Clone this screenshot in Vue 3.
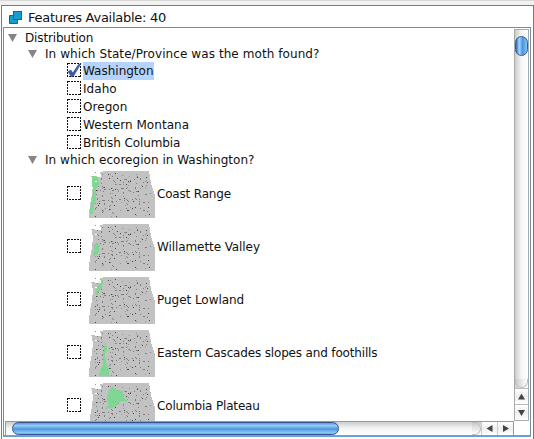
<script setup>
const states = ['Washington', 'Idaho', 'Oregon', 'Western Montana', 'British Columbia']
const regions = [
  { name: 'Coast Range', spacing: -0.18, shape: 'M3 4L9 6L10 13L7 18L7 29L5 34L4 42L1 43L1 38L3 29L4 20L3 12Z' },
  { name: 'Willamette Valley', spacing: -0.09, shape: 'M7 19L11 20L10 27L8 31L4 32L5 24Z' },
  { name: 'Puget Lowland', spacing: -0.04, shape: 'M11 1L14 3L13 11L10 14L8 19L6 17L8 10L10 7Z' },
  { name: 'Eastern Cascades slopes and foothills', spacing: -0.16, shape: 'M17 12L18 20L16 24L17 33L20 39L20 46L10 46L11 40L14 35L14 25L15 18Z' },
  { name: 'Columbia Plateau', spacing: -0.17, shape: 'M24 3L27 7L34 8L35 14L38 18L31 18L28 23L22 25L16 26L19 22L18 16L19 9Z' }
]
const lines = 'M8 6L10 15L7 23L9 30L6 40M14 3L12 11L15 19L13 28L17 36L13 43M11 20L18 18L24 20L31 17L38 18L43 22L50 20L56 24L62 22M23 5L26 13L33 14L37 8L44 10L49 5L55 12L59 16M35 17L34 25L39 30L37 38L42 43M10 31L18 29L25 32L32 28L39 31L46 27L53 32L61 31M48 12L46 19L51 26L50 36L57 41L62 40M21 22L24 29L20 37L26 44'
let seed = 37
function random() {
  seed = (seed * 1664525 + 1013904223) % 4294967296
  return seed / 4294967296
}
const dots = Array.from({ length: 72 }, () => {
  const y = Math.floor(random() * 46)
  return { x: Math.floor(4 + random() * 57), y, dark: random() > 0.45 }
})
</script>

<template>
  <main class="window">
    <section class="features">
      <header>
        <svg class="logo" width="14" height="14" viewBox="0 0 14 14">
          <rect x="4.5" y="1.5" width="8" height="8" fill="#149fd0" stroke="#176783" />
          <path d="M.5 5.5H4.5V9.5H8.5V13.5H.5Z" fill="#139fd0" stroke="#176783" />
        </svg>
        <span class="title">Features Available: 40</span>
      </header>
      <div class="pane">
        <div class="tree">
          <div class="branch root"><i class="arrow"></i><span class="root-label">Distribution</span></div>
          <div class="branch"><i class="arrow"></i><span class="state-question">In which State/Province was the moth found?</span></div>
          <div v-for="(state, index) in states" :key="state" class="choice">
            <svg class="box" width="16" height="18" viewBox="0 0 16 18">
              <rect x=".5" y="1.5" width="13" height="13" class="dashes" />
              <path v-if="index === 0" d="M1 9.5L4 8L5.7 11L11.5 2.5L14.2 1.3L6.3 14.5H4Z" fill="#385ba5" stroke="#294a91" stroke-width=".5" />
            </svg>
            <span class="state" :class="{ selected: index === 0 }">{{ state }}</span>
          </div>
          <div class="branch"><i class="arrow"></i><span class="region-question">In which ecoregion in Washington?</span></div>
          <div v-for="region in regions" :key="region.name" class="region">
            <svg class="box" width="16" height="18" viewBox="0 0 16 18">
              <rect x=".5" y="1.5" width="13" height="13" class="dashes" />
            </svg>
            <svg class="map" width="67" height="47" viewBox="0 0 67 47">
              <g shape-rendering="crispEdges">
                <path d="M2 4L7 6L12 6L11 1L16 0H60L62 12L66 25V47H0V42L1 34L3 23L4 13Z" fill="#c2c2c2" />
                <path :d="lines" class="borders" />
                <rect v-for="(dot, i) in dots" :key="i" :x="dot.x" :y="dot.y" width="1" height="1" :fill="dot.dark ? '#444' : '#959595'" />
                <path :d="region.shape" fill="#7bd98f" fill-opacity=".92" />
                <path d="M2 4L5 5M9 5L12 6M12 3L11 5M6 10L8 11" class="coast" />
              </g>
            </svg>
            <span :style="{ letterSpacing: region.spacing + 'px' }">{{ region.name }}</span>
          </div>
        </div>
        <div class="vertical">
          <i class="thumb"></i>
          <i class="track-end"></i>
          <div class="button"><i class="up"></i></div>
          <div class="button"><i class="down"></i></div>
        </div>
        <div class="horizontal">
          <i class="thumb"></i>
          <i class="track-end"></i>
          <div class="button"><i class="left"></i></div>
          <div class="button"><i class="right"></i></div>
        </div>
      </div>
    </section>
  </main>
</template>

<style>
body { margin: 0; overflow: hidden; }
</style>
<style scoped>
* { box-sizing: border-box; }
.window { width: 534px; height: 439px; padding: 5px 0 0 1px; background: linear-gradient(#d8d8d8 0 1px, #f1f1f1 1px 5px, #fff 5px); font: 12px/16px "DejaVu Sans", sans-serif; color: #111; overflow: hidden; }
.features { height: 434px; border: 1px solid #777b80; border-bottom: 0; padding: 0 2px 2px 1px; background: #fff; }
header { height: 21px; display: flex; align-items: center; padding-left: 6px; gap: 5px; }
.logo { flex: none; }
.title { font-size: 13px; letter-spacing: -.27px; white-space: nowrap; padding-top: 2px; }
.pane { width: 528px; height: 410px; border: 1px solid #738fa7; border-bottom: 2px solid #69a0cf; padding: 1px 1px 0; display: grid; grid-template: 392px 15px / 509px 15px; }
.tree { overflow: hidden; padding-top: 1px; white-space: nowrap; }
.branch { display: flex; align-items: center; height: 16px; padding-left: 23px; gap: 8px; }
.branch.root { padding-left: 3px; }
.root-label { letter-spacing: -.15px; }
.state-question { letter-spacing: .08px; }
.region-question { letter-spacing: .03px; }
.arrow { width: 9px; height: 8px; background: #858585; clip-path: polygon(0 0, 100% 0, 50% 100%); }
.choice { height: 18px; display: flex; align-items: center; padding-left: 62px; }
.choice:nth-child(n+4) .state { letter-spacing: .05px; }
.choice:nth-child(7) .state { letter-spacing: -.1px; }
.state { height: 18px; line-height: 18px; }
.selected { background: #b5d3fc; }
.box { flex: none; overflow: visible; }
.dashes { fill: #fff; stroke: #111; stroke-dasharray: 2 1; shape-rendering: crispEdges; }
.region { height: 53px; display: flex; align-items: center; padding-left: 62px; padding-bottom: 2px; }
.map { flex: none; margin: 2px 1px 0 6px; }
.borders { fill: none; stroke: #606060; stroke-width: .7; stroke-dasharray: 1 3 2 3; }
.coast { fill: none; stroke: #fff; stroke-width: 1; }
.vertical { display: flex; flex-direction: column; border: 1px solid #aaa; background: linear-gradient(90deg, #ccc, #f6f6f6 50%, #fff); padding-top: 6px; }
.vertical .thumb { width: 13px; height: 20px; border: 1px solid #375b91; border-radius: 7px; background: linear-gradient(90deg, #2866b3, #a6d4ff 30%, #4a94df 60%, #83c4fa); }
.vertical .track-end { height: 9px; margin-top: auto; border: 1px solid #bbb; border-top: 0; border-radius: 0 0 7px 7px; background: linear-gradient(90deg, #ccc, #fff); }
.vertical .button { height: 16px; border-top: 1px solid #bbb; }
.button { display: flex; align-items: center; justify-content: center; background: linear-gradient(#fff, #eee 50%, #fff); }
.up, .down { width: 7px; height: 6px; background: #444; clip-path: polygon(50% 0, 100% 100%, 0 100%); }
.down { transform: rotate(180deg); }
.horizontal { display: flex; border: 1px solid #999; background: linear-gradient(#ccc, #f6f6f6 50%, #fff); padding-left: 6px; }
.horizontal .thumb { width: 327px; height: 13px; border: 1px solid #315792; border-radius: 7px; background: linear-gradient(#5f98dc, #9acbf8 24%, #66aae9 45%, #4b94dc 55%, #89c8f8 85%, #70aeda); }
.horizontal .track-end { width: 9px; height: 13px; margin-left: auto; border: 1px solid #bbb; border-left: 0; border-radius: 0 7px 7px 0; background: linear-gradient(#ccc, #fff); }
.horizontal .button { width: 16px; border-left: 1px solid #ccc; }
.left, .right { width: 6px; height: 7px; background: #444; clip-path: polygon(0 50%, 100% 0, 100% 100%); }
.right { transform: rotate(180deg); }
</style>
